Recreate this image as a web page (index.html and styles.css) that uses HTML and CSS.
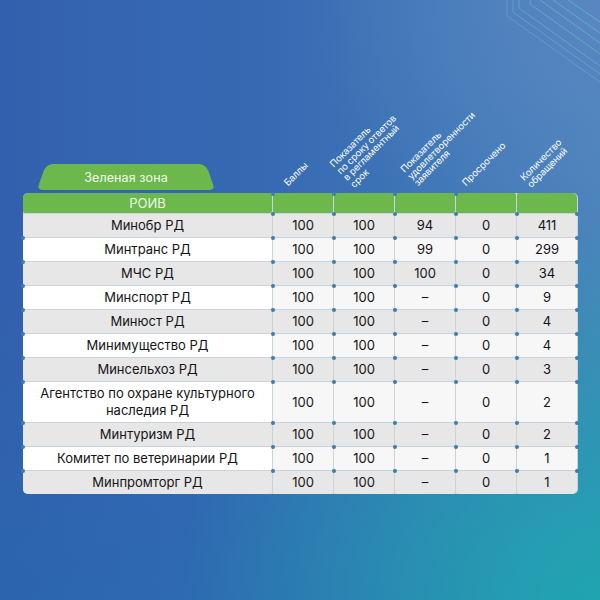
FILE: index.html
```html
<!DOCTYPE html>
<html lang="ru">
<head>
<meta charset="utf-8">
<title>Зеленая зона</title>
<link rel="stylesheet" href="styles.css">
</head>
<body>
<div class="page">
  <svg class="deco" width="110" height="100" viewBox="0 0 110 100" aria-hidden="true">
    <g fill="none" stroke-width="0.8">
      <polyline points="17,0 17,16 110,82" stroke="#8fdde0" stroke-opacity="0.3"/>
      <polyline points="23,0 23,12 110,74" stroke="#8fdde0" stroke-opacity="0.35"/>
      <polyline points="29,0 29,8 110,66" stroke="#7fd8d6" stroke-opacity="0.45"/>
      <polyline points="40,0 40,4 110,54" stroke="#6fd3cf" stroke-opacity="0.55"/>
      <polyline points="50,0 110,43" stroke="#5fd0c8" stroke-opacity="0.65"/>
      <polyline points="63,0 110,33" stroke="#5fd0c8" stroke-opacity="0.7"/>
      <polyline points="78,0 110,22" stroke="#5fd0c8" stroke-opacity="0.7"/>
    </g>
  </svg>

  <div class="board">
    <div class="head">
      <div class="head-cell"><div class="tab"><span>Зеленая зона</span></div></div>
      <div class="head-cell"><div class="lbl lbl-1">Баллы</div></div>
      <div class="head-cell"><div class="lbl lbl-2">Показатель<br>по сроку ответов<br>в регламентный<br>срок</div></div>
      <div class="head-cell"><div class="lbl lbl-3">Показатель<br>удовлетворенности<br>заявителя</div></div>
      <div class="head-cell"><div class="lbl lbl-4">Просрочено</div></div>
      <div class="head-cell"><div class="lbl lbl-5">Количество<br>обращений</div></div>
    </div>

    <div class="table">
      <div class="c g first tl">РОИВ</div><div class="c g"></div><div class="c g"></div><div class="c g"></div><div class="c g"></div><div class="c g last tr"></div>

      <div class="c d first">Минобр РД</div><div class="c d">100</div><div class="c d">100</div><div class="c d">94</div><div class="c d">0</div><div class="c d last">411</div>

      <div class="c w name first">Минтранс РД</div><div class="c w">100</div><div class="c w">100</div><div class="c w">99</div><div class="c w">0</div><div class="c w last">299</div>

      <div class="c d first">МЧС РД</div><div class="c d">100</div><div class="c d">100</div><div class="c d">100</div><div class="c d">0</div><div class="c d last">34</div>

      <div class="c w name first">Минспорт РД</div><div class="c w">100</div><div class="c w">100</div><div class="c w">–</div><div class="c w">0</div><div class="c w last">9</div>

      <div class="c d first">Минюст РД</div><div class="c d">100</div><div class="c d">100</div><div class="c d">–</div><div class="c d">0</div><div class="c d last">4</div>

      <div class="c w name first">Минимущество РД</div><div class="c w">100</div><div class="c w">100</div><div class="c w">–</div><div class="c w">0</div><div class="c w last">4</div>

      <div class="c d first">Минсельхоз РД</div><div class="c d">100</div><div class="c d">100</div><div class="c d">–</div><div class="c d">0</div><div class="c d last">3</div>

      <div class="c w name first tall">Агентство по охране культурного<br>наследия РД</div><div class="c w tall">100</div><div class="c w tall">100</div><div class="c w tall">–</div><div class="c w tall">0</div><div class="c w last tall">2</div>

      <div class="c d first">Минтуризм РД</div><div class="c d">100</div><div class="c d">100</div><div class="c d">–</div><div class="c d">0</div><div class="c d last">2</div>

      <div class="c w name first">Комитет по ветеринарии РД</div><div class="c w">100</div><div class="c w">100</div><div class="c w">–</div><div class="c w">0</div><div class="c w last">1</div>

      <div class="c d first bl end">Минпромторг РД</div><div class="c d end">100</div><div class="c d end">100</div><div class="c d end">–</div><div class="c d end">0</div><div class="c d last br end">1</div>
    </div>
  </div>
</div>
</body>
</html>
```

FILE: styles.css
```css
* { box-sizing: border-box; }

html, body {
  margin: 0;
  padding: 0;
}

body {
  width: 600px;
  height: 600px;
  overflow: hidden;
  font-family: Inter, "Noto Sans", "Liberation Sans", sans-serif;
}

.page {
  position: relative;
  width: 600px;
  height: 600px;
  background:
    radial-gradient(ellipse 420px 380px at 100% 100%, rgba(30, 168, 176, 0.95) 0%, rgba(30, 168, 176, 0) 100%),
    radial-gradient(ellipse 300px 260px at 100% 0%, rgba(96, 136, 196, 0.7) 0%, rgba(96, 136, 196, 0) 100%),
    linear-gradient(to bottom, rgba(0, 0, 0, 0) 50%, rgba(30, 110, 175, 0.35) 100%),
    linear-gradient(to right, #3360ae 0%, #376ab3 45%, #3f78b7 75%, #4a83ba 100%);
  padding: 164px 22px 0 23px;
}

.deco {
  position: absolute;
  top: 0;
  right: 0;
}

.board {
  display: flex;
  flex-direction: column;
}

.head,
.table {
  display: grid;
  grid-template-columns: 249px repeat(5, 60px);
  column-gap: 1px;
}

.head {
  height: 27px;
  margin-bottom: 2px;
}

.head-cell {
  position: relative;
}

/* tab */
.tab {
  position: relative;
  margin-left: 14px;
  width: 178px;
  height: 26px;
  display: flex;
  align-items: center;
  justify-content: center;
  color: #f4fbef;
  font-size: 12.5px;
  letter-spacing: 0.1px;
}

.tab span {
  position: relative;
  z-index: 1;
  padding-top: 1px;
}

.tab::before,
.tab::after {
  content: "";
  position: absolute;
  top: 0;
  bottom: 0;
  width: 60%;
  background: #6cb84c;
  transform-origin: 50% 100%;
}

.tab::before {
  left: 0;
  border-radius: 7px 3px 3px 5px;
  transform: skewX(-19deg);
}

.tab::after {
  right: 0;
  border-radius: 3px 7px 5px 3px;
  transform: skewX(19deg);
}

/* rotated labels */
.lbl {
  position: absolute;
  transform-origin: 0 100%;
  transform: rotate(-45deg);
  white-space: nowrap;
  color: #ffffff;
  font-size: 9.5px;
  line-height: 9.5px;
  letter-spacing: -0.1px;
}

.lbl-1 { left: 16px; bottom: 4px; }
.lbl-2 { left: 21px; bottom: 2px; }
.lbl-3 { left: 24px; bottom: 4px; }
.lbl-4 { left: 11px; bottom: 4px; }
.lbl-5 { left: 15px; bottom: 2px; }

/* table */
.table {
  row-gap: 1px;
  background: #cad2da;
  border-radius: 5px;
}

.c {
  position: relative;
  display: flex;
  align-items: center;
  justify-content: center;
  text-align: center;
  height: 23px;
  font-size: 13px;
  line-height: 17px;
  color: #141416;
  border-radius: 2px;
}

.c.g {
  height: 20px;
  background: #6cb84c;
  color: #eef8e6;
  font-size: 13px;
}

.c.d { background: #e7e7e8; }
.c.w { background: #f7f7f8; }
.c.w.name { background: #ffffff; }

.c.tall { height: 40px; }

.tl { border-top-left-radius: 5px; }
.tr { border-top-right-radius: 5px; }
.bl { border-bottom-left-radius: 5px; }
.br { border-bottom-right-radius: 5px; }

/* intersection dots */
.c::after {
  content: "";
  position: absolute;
  left: -2.5px;
  bottom: -2.5px;
  width: 4px;
  height: 4px;
  border-radius: 50%;
  background: #3f7dab;
  z-index: 2;
}

.c.last::before {
  content: "";
  position: absolute;
  right: -2px;
  bottom: -2.5px;
  width: 4px;
  height: 4px;
  border-radius: 50%;
  background: #3f7dab;
  z-index: 2;
}

.c.g:not(.first)::before {
  content: "";
  position: absolute;
  left: -2.5px;
  top: -1.5px;
  width: 4px;
  height: 4px;
  border-radius: 50%;
  background: #3f7dab;
  z-index: 2;
}

.c.g.last::before {
  top: auto;
  left: auto;
}

.c.g.first::after { display: none; }

.c.end::after,
.c.end.last::before {
  display: none;
}
```
